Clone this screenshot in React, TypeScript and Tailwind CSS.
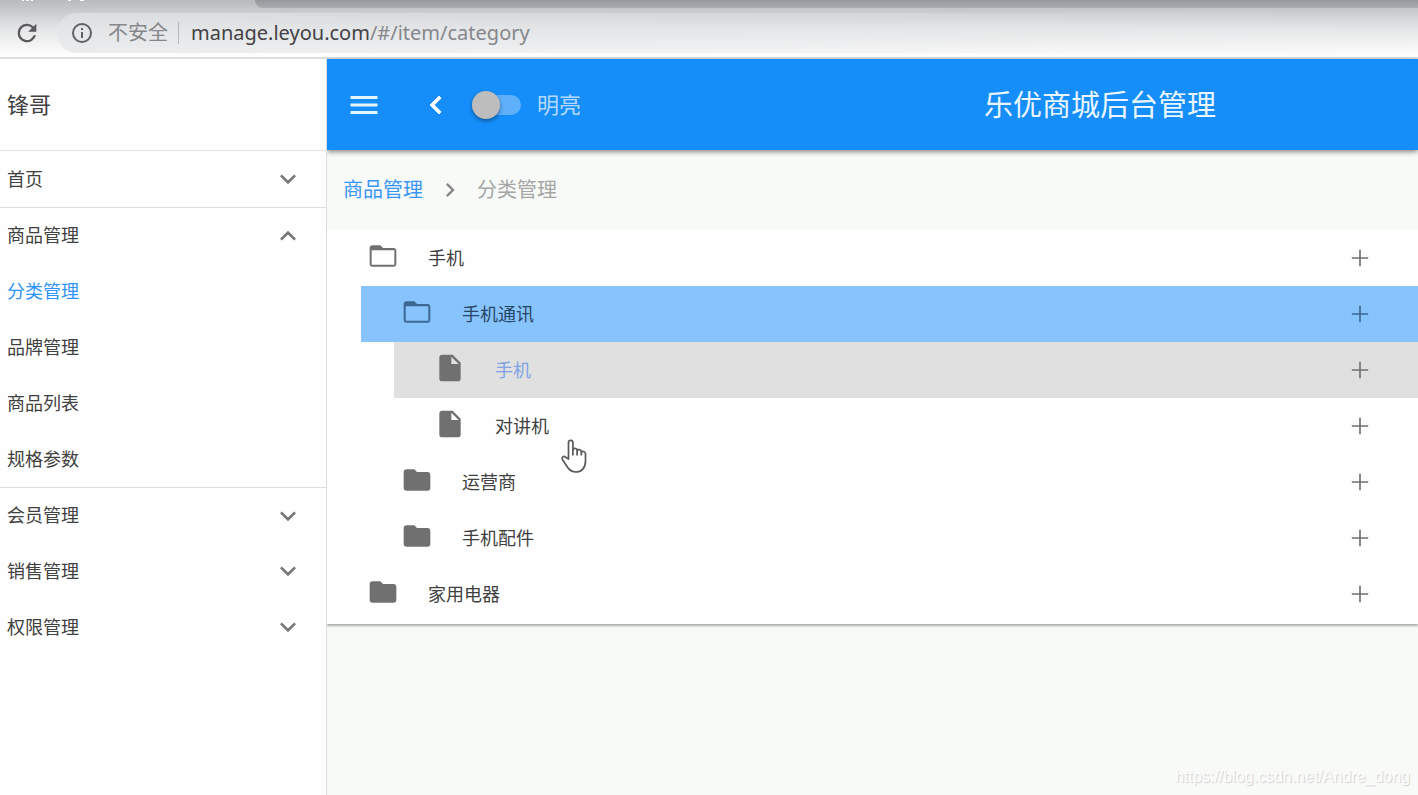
import type { ReactNode } from "react";

interface IconProps {
  className?: string;
  children: ReactNode;
}

interface MenuItemProps {
  title: string;
  open?: boolean;
  active?: boolean;
  expandable?: boolean;
  divided?: boolean;
}

type NodeIcon = "folder-open" | "folder" | "file";

interface TreeNode {
  id: number;
  name: string;
  icon: NodeIcon;
  level: 0 | 1 | 2;
  state?: "selected" | "hovered";
}

const menu: MenuItemProps[] = [
  { title: "首页", expandable: true },
  { title: "商品管理", expandable: true, open: true, divided: true },
  { title: "分类管理", active: true },
  { title: "品牌管理" },
  { title: "商品列表" },
  { title: "规格参数" },
  { title: "会员管理", expandable: true, divided: true },
  { title: "销售管理", expandable: true },
  { title: "权限管理", expandable: true },
];

const nodes: TreeNode[] = [
  { id: 1, name: "手机", icon: "folder-open", level: 0 },
  { id: 2, name: "手机通讯", icon: "folder-open", level: 1, state: "selected" },
  { id: 3, name: "手机", icon: "file", level: 2, state: "hovered" },
  { id: 4, name: "对讲机", icon: "file", level: 2 },
  { id: 5, name: "运营商", icon: "folder", level: 1 },
  { id: 6, name: "手机配件", icon: "folder", level: 1 },
  { id: 7, name: "家用电器", icon: "folder", level: 0 },
];

const indent = ["ml-0", "ml-[34px]", "ml-[67px]"];

const iconPaths: Record<NodeIcon, string> = {
  "folder-open": "M20 6h-8l-2-2H4c-1.1 0-2 .9-2 2v12c0 1.1.9 2 2 2h16c1.1 0 2-.9 2-2V8c0-1.1-.9-2-2-2zm.5 12.500h-17V7.700h17v10.800z",
  folder: "M10 4H4c-1.1 0-2 .9-2 2v12c0 1.1.9 2 2 2h16c1.1 0 2-.9 2-2V8c0-1.1-.9-2-2-2h-8l-2-2z",
  file: "M6 2c-1.1 0-2 .9-2 2v16c0 1.1.9 2 2 2h12c1.1 0 2-.9 2-2V8l-6-6H6zm7 7V3.5L18.500 9H13z",
};

const Icon = ({ className, children }: IconProps) => (
  <svg viewBox="0 0 24 24" fill="currentColor" aria-hidden="true" className={`shrink-0 ${className ?? ""}`}>
    {children}
  </svg>
);

const BrowserBar = () => {
  return (
    <div className="relative border-b-2 border-[#dddedd] bg-linear-to-b from-[#b9babc] via-[#e4e5e6] to-white">
      {/* Lower edge of the tab title */}
      <svg viewBox="0 0 90 3" className="absolute top-0 left-0 h-[3px] w-[90px]" fill="white" aria-hidden="true">
        <path d="M22 0h2v1h-2zM26 0h3v1h-3zM31 0h2v1h-2zM68 0h3v1h-3zM80 0h4v1h-4z" />
      </svg>

      {/* Tab strip */}
      <div className="flex h-2 justify-end">
        <div className="w-[82%] rounded-bl-lg bg-linear-to-b from-[#97989d] to-[#abacb0]" />
      </div>

      {/* Address bar */}
      <div className="flex h-[49px] items-center pl-[13px]">
        <button type="button" aria-label="Reload" className="text-[#5a5a5c]">
          <Icon className="size-7">
            <path d="M17.650 6.350A7.960 7.960 0 0 0 12 4a8 8 0 1 0 7.730 10h-2.080A6 6 0 1 1 12 6c1.660 0 3.140.69 4.220 1.780L13 11h7V4l-2.350 2.350z" />
          </Icon>
        </button>
        <div className="ml-4 flex h-10 grow items-center rounded-l-full bg-linear-to-r from-[#e3e5e7]/70 to-transparent pl-[13px] text-[20px] text-[#85878a]">
          <Icon className="size-6 text-[#606164]">
            <path d="M11 7h2v2h-2zm0 4h2v6h-2zm1-9a10 10 0 1 0 0 20 10 10 0 0 0 0-20zm0 18a8 8 0 1 1 0-16 8 8 0 0 1 0 16z" />
          </Icon>
          <span className="ml-3.5">不安全</span>
          <span className="mr-3 ml-2.5 h-[22px] w-px bg-[#b5b6b8]" />
          <span>
            <span className="text-[#424244]">manage.leyou.com</span>/#/item/category
          </span>
        </div>
      </div>
    </div>
  );
};

const MenuItem = ({ title, open, active, expandable, divided }: MenuItemProps) => {
  return (
    <li className={`h-14 ${divided ? "border-t border-[#dedede]" : ""}`}>
      <a href="#" className={`flex h-full items-center justify-between pr-[22px] pl-[7px] text-[18px] ${active ? "text-[#2e93f8]" : "text-[#404040]"}`}>
        <span>{title}</span>
        {expandable && (
          <Icon className="size-8 text-[#757575]">
            {open ? <path d="M7.410 15.410 12 10.830l4.590 4.580L18 14l-6-6-6 6z" /> : <path d="M7.410 8.590 12 13.170l4.590-4.580L18 10l-6 6-6-6z" />}
          </Icon>
        )}
      </a>
    </li>
  );
};

const Sidebar = () => {
  return (
    <aside className="relative z-20 w-[327px] shrink-0 border-r border-[#dcdddc] bg-[#fefefe]">
      <div className="flex h-[92px] items-center border-b border-[#e2e2e2] pl-[7px] text-[22px] text-[#404040]">锋哥</div>
      <ul>
        {menu.map((item) => (
          <MenuItem key={item.title} {...item} />
        ))}
      </ul>
    </aside>
  );
};

const Toolbar = () => {
  return (
    <header className="relative z-10 flex h-[91px] items-center bg-[#158ef9] pl-[19px] text-white shadow-[0_2px_5px_rgba(0,0,0,0.45)]">
      <button type="button" aria-label="Menu" className="text-[#e2f7ff]">
        <Icon className="size-9">
          <path d="M3 18h18v-2H3v2zm0-5h18v-2H3v2zm0-7v2h18V6H3z" />
        </Icon>
      </button>
      <button type="button" aria-label="Back" className="ml-9">
        <Icon className="size-9">
          <path d="M15.410 7.410 14 6l-6 6 6 6 1.410-1.410L10.830 12z" stroke="currentColor" strokeWidth="0.600" />
        </Icon>
      </button>
      <label className="ml-[18px] flex items-center text-[22px] text-[#b4dafd]">
        <input type="checkbox" role="switch" className="peer sr-only" />
        <span className="mr-4 flex h-5 w-[49px] items-center rounded-full bg-[#5eb0fb]">
          <span className="size-7 shrink-0 rounded-full bg-[#bdbdbd] shadow-[0_2px_4px_rgba(0,0,0,0.4)]" />
        </span>
        明亮
      </label>
      <h1 className="mr-[202px] ml-auto text-[29px] text-[#eaf6ff]">乐优商城后台管理</h1>
    </header>
  );
};

const TreeRow = ({ node }: { node: TreeNode }) => {
  const background = node.state === "selected" ? "bg-[#87c4fd]" : node.state === "hovered" ? "bg-[#e0e0e0]" : "";
  const iconColor = node.state === "selected" ? "text-[#3c6791]" : "text-[#707070]";
  const textColor = node.state === "selected" ? "text-[#274666]" : node.state === "hovered" ? "text-[#7fa3e6]" : "text-[#404040]";

  return (
    <li className={indent[node.level]}>
      <div className={`flex h-14 items-center pr-11 pl-10 ${background}`}>
        <Icon className={`mb-1 size-8 ${iconColor}`}>
          <path fillRule="evenodd" d={iconPaths[node.icon]} />
        </Icon>
        <span className={`ml-[29px] grow text-[18px] ${textColor}`}>{node.name}</span>
        <button type="button" aria-label="Add" className={iconColor}>
          <Icon className="size-7">
            <path d="M11.300 5h1.400v6.300H19v1.400h-6.300V19h-1.400v-6.300H5v-1.400h6.300z" />
          </Icon>
        </button>
      </div>
    </li>
  );
};

const App = () => {
  return (
    <div className="relative flex min-h-screen flex-col overflow-x-hidden bg-[#f8faf8] font-['Noto_Sans','Noto_Sans_CJK_SC',sans-serif]">
      <BrowserBar />

      <div className="flex grow">
        <Sidebar />
        <main className="min-w-0 grow">
          <Toolbar />

          {/* Breadcrumbs */}
          <nav className="flex h-20 items-center pl-4 text-[20px]">
            <a href="#" className="text-[#3b97f6]">
              商品管理
            </a>
            <Icon className="mx-[13px] size-7 text-[#858585]">
              <path d="M10 6 8.590 7.410 13.170 12l-4.580 4.590L10 18l6-6z" />
            </Icon>
            <span className="text-[#a5a6a5]">分类管理</span>
          </nav>

          {/* Category tree */}
          <ul className="bg-[#fefefe] pb-0.5 shadow-[0_2px_2px_rgba(0,0,0,0.3)]">
            {nodes.map((node) => (
              <TreeRow key={node.id} node={node} />
            ))}
          </ul>
        </main>
      </div>

      {/* Mouse pointer */}
      <svg viewBox="0 0 28 36" className="absolute top-[438px] left-[560px] z-20 h-9 w-7" fill="white" stroke="#5a5a5a" strokeWidth="1.700" strokeLinejoin="round" aria-hidden="true">
        <path d="M8.500 21V4.500a2.200 2.200 0 0 1 4.400 0V12c0-2.300 4-2.300 4.200 0v1c.4-2 4-1.800 4.200.5v1c.6-1.700 4-1.200 4.200 1V23c0 7-4 11-9.500 11-4.500 0-7-2.300-9-5.500l-4.700-7.200c-1-2 1.300-3.600 3-2.300z" />
        <path d="M12.900 12v5.500M17.100 13v4.500M21.300 14.500v3" />
      </svg>

      <p className="absolute right-2 bottom-2 font-['Liberation_Sans',sans-serif] text-[16px] leading-5 text-[#fdfdfd] [text-shadow:1px_1px_1px_#cfcfcf]">https://blog.csdn.net/Andre_dong</p>
    </div>
  );
};

export default App;
